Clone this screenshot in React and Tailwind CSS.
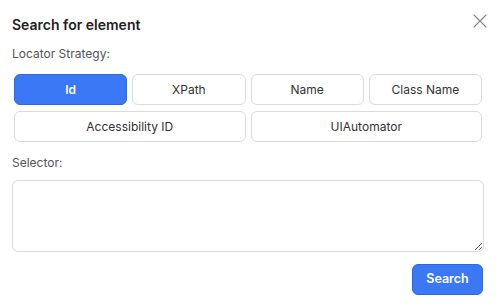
import { X } from 'lucide-react'

const row1 = ['Id', 'XPath', 'Name', 'Class Name']
const row2 = ['Accessibility ID', 'UIAutomator']

function StrategyButton({ label, active }) {
  return (
    <button
      className={`h-[31px] rounded-md border text-[12px] ${
        active
          ? 'bg-[#3b78f6] border-[#2f67e0] text-white font-semibold'
          : 'bg-white border-[#dcdcdc] text-[#333]'
      }`}
    >
      {label}
    </button>
  )
}

export default function App() {
  return (
    <div className="w-[499px] h-[308px] bg-white font-['Inter',sans-serif] relative">
      <div className="pl-3 pr-[15px] pt-[15px]">
        <h2 className="text-[14px] font-semibold text-[#222] leading-5">Search for element</h2>
        <button className="absolute top-[9px] left-[468px] text-[#888]">
          <X size={24} strokeWidth={1.1} />
        </button>

        <p className="mt-[11px] text-[12px] text-[#555] leading-4">Locator Strategy:</p>

        <div className="mt-[12px] px-[2px] flex flex-col gap-[6px]">
          <div className="grid grid-cols-4 gap-[5px]">
            {row1.map((s) => (
              <StrategyButton key={s} label={s} active={s === 'Id'} />
            ))}
          </div>
          <div className="grid grid-cols-2 gap-[5px]">
            {row2.map((s) => (
              <StrategyButton key={s} label={s} />
            ))}
          </div>
        </div>

        <p className="mt-[13px] text-[12px] text-[#555] leading-4">Selector:</p>
        <textarea className="mt-[9px] block w-full h-[72px] rounded-md border border-[#dcdcdc] outline-none" />

        <div className="mt-[12px] flex justify-end pr-[1px]">
          <button className="w-[71px] h-[31px] rounded-md bg-[#3b78f6] border border-[#2f67e0] text-white text-[12.5px] font-semibold">
            Search
          </button>
        </div>
      </div>
    </div>
  )
}
